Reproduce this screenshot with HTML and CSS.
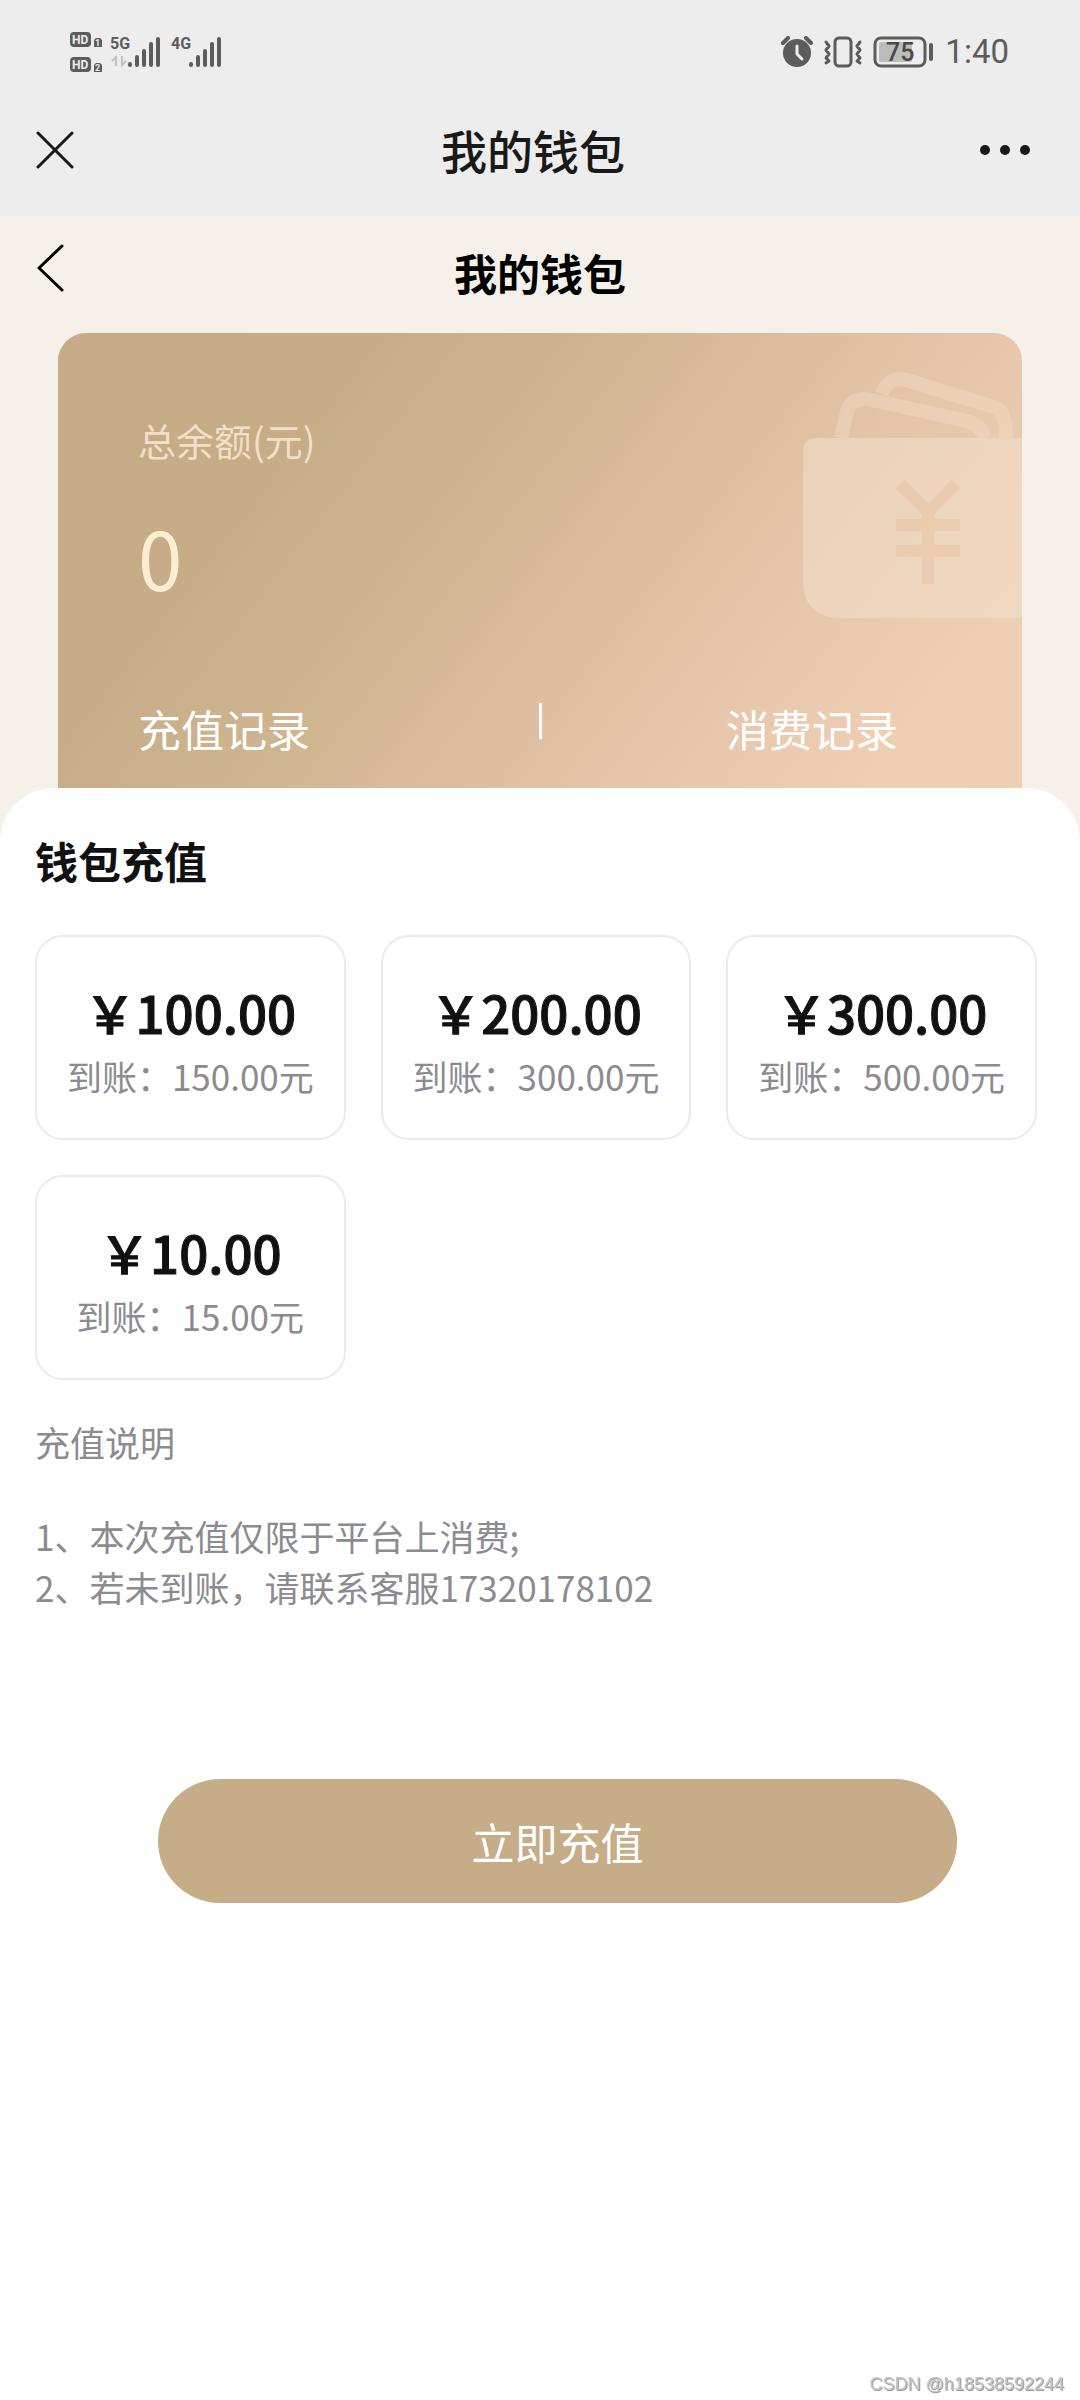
FILE: index.html
```html
<!DOCTYPE html>
<html lang="zh-CN">
<head>
<meta charset="utf-8">
<meta name="viewport" content="width=device-width, initial-scale=1">
<title>我的钱包</title>
<link rel="stylesheet" href="styles.css">
</head>
<body>
<header class="chrome">
  <div class="status">
    <svg class="status-signal" width="160" height="44" viewBox="0 0 160 44" role="img" aria-label="信号">
      <g fill="#5c5c5c">
        <rect x="0" y="2" width="21" height="15" rx="4"/>
        <rect x="0" y="27" width="21" height="15" rx="4"/>
        <path d="M26 8h4l2 2v7h-8v-7z"/>
        <path d="M26 33h4l2 2v7h-8v-7z"/>
      </g>
      <g class="status-hd">
        <text x="2" y="14">HD</text>
        <text x="2" y="39">HD</text>
        <text class="status-sim" x="25" y="16">1</text>
        <text class="status-sim" x="25" y="41">2</text>
      </g>
      <text class="status-net" x="40" y="19">5G</text>
      <text class="status-net" x="101" y="19">4G</text>
      <g fill="none" stroke="#c2c2c2" stroke-width="2">
        <path d="M42 31l4-4v9M52 26v9l4-4"/>
      </g>
      <g stroke="#5c5c5c" stroke-width="4" stroke-linecap="round">
        <path d="M60 34v1M67 27v8M74 21v14M81 14v21M88 9v26"/>
        <path d="M121 34v1M128 27v8M135 21v14M142 14v21M149 9v26"/>
      </g>
    </svg>
    <div class="status-right">
      <svg width="32" height="32" viewBox="0 0 32 32" aria-hidden="true">
        <circle cx="16" cy="17" r="14" fill="#5c5c5c"/>
        <path d="M2 7l5-5M25 2l5 5" stroke="#5c5c5c" stroke-width="4" stroke-linecap="round"/>
        <path d="M16 10v8l5 5" fill="none" stroke="#ededed" stroke-width="3" stroke-linecap="round" stroke-linejoin="round"/>
      </svg>
      <svg width="40" height="32" viewBox="0 0 40 32" fill="none" stroke="#5c5c5c" stroke-width="3" stroke-linecap="round" stroke-linejoin="round" aria-hidden="true">
        <rect x="12" y="2" width="16" height="28" rx="4"/>
        <path d="M3 6l3 4-3 4 3 4-3 4 3 3-3 2M37 6l-3 4 3 4-3 4 3 4-3 3 3 2"/>
      </svg>
      <svg width="62" height="32" viewBox="0 0 62 32" role="img" aria-label="电量 75%">
        <rect x="2" y="2" width="50" height="28" rx="6" fill="none" stroke="#5c5c5c" stroke-width="3"/>
        <rect x="6" y="6" width="33" height="20" rx="2" fill="#bcbcbc"/>
        <path d="M58 9v14" stroke="#5c5c5c" stroke-width="4" stroke-linecap="round"/>
        <text class="status-level" x="13" y="25">75</text>
      </svg>
      <span class="status-time">1:40</span>
    </div>
  </div>
  <div class="titlebar">
    <button class="icon-button" type="button" aria-label="关闭">
      <svg width="38" height="38" viewBox="0 0 38 38" fill="none" stroke="#191919" stroke-width="3" stroke-linecap="round"><path d="M2 2l34 34M36 2L2 36"/></svg>
    </button>
    <div class="titlebar-title">我的钱包</div>
    <button class="icon-button titlebar-more" type="button" aria-label="更多">
      <svg width="50" height="12" viewBox="0 0 50 12" fill="#191919"><circle cx="5" cy="6" r="5"/><circle cx="25" cy="6" r="5"/><circle cx="45" cy="6" r="5"/></svg>
    </button>
  </div>
</header>

<main class="page">
  <div class="page-header">
    <button class="icon-button page-back" type="button" aria-label="返回">
      <svg width="28" height="48" viewBox="0 0 28 48" fill="none" stroke="#000" stroke-width="3" stroke-linecap="round" stroke-linejoin="round"><path d="M25 2L2 24l23 22"/></svg>
    </button>
    <h1 class="page-title">我的钱包</h1>
  </div>

  <section class="balance">
    <svg class="balance-art" width="232" height="270" viewBox="0 0 232 270" aria-hidden="true">
      <g fill="none" stroke="#f2dcc6" stroke-opacity=".45" stroke-width="14" stroke-linejoin="round">
        <path d="M51 78l6-26q4-14 20-13l100 22q16 5 18 17"/>
        <path d="M92 34q6-18 24-14l88 27q12 4 12 31"/>
      </g>
      <path d="M232 78H27q-14 0-14 14v128q0 38 38 38h181z" fill="#f2dcc6" fill-opacity=".6"/>
      <path d="M110 124l28 28 28-28M106 165h64M106 191h64M138 152v72" fill="none" stroke="#e9c8ab" stroke-opacity=".7" stroke-width="12"/>
    </svg>
    <p class="balance-label">总余额(元)</p>
    <p class="balance-value">0</p>
    <nav class="records">
      <a class="record-link" href="#recharge">充值记录</a>
      <span class="records-divider"></span>
      <a class="record-link record-link-end" href="#spend">消费记录</a>
    </nav>
  </section>

  <section class="sheet">
    <h2 class="sheet-title">钱包充值</h2>
    <div class="plans">
      <button class="plan" type="button"><span class="plan-price">￥100.00</span><span class="plan-credit">到账：150.00元</span></button>
      <button class="plan" type="button"><span class="plan-price">￥200.00</span><span class="plan-credit">到账：300.00元</span></button>
      <button class="plan" type="button"><span class="plan-price">￥300.00</span><span class="plan-credit">到账：500.00元</span></button>
      <button class="plan" type="button"><span class="plan-price">￥10.00</span><span class="plan-credit">到账：15.00元</span></button>
    </div>
    <div class="notes">
      <h3 class="notes-title">充值说明</h3>
      <p>1、本次充值仅限于平台上消费;</p>
      <p>2、若未到账，请联系客服17320178102</p>
    </div>
    <button class="submit" type="button">立即充值</button>
  </section>
</main>
<div class="watermark">CSDN @h18538592244</div>
</body>
</html>
```
FILE: styles.css
```css
* { box-sizing: border-box; }

body {
  position: relative;
  display: flex;
  flex-direction: column;
  min-height: 100vh;
  margin: 0;
  background: #fff;
  color: #111;
  font-family: "Noto Sans CJK SC", sans-serif;
}

h1, h2, h3, p { margin: 0; }

button {
  padding: 0;
  border: 0;
  background: none;
  color: inherit;
  font: inherit;
  cursor: pointer;
}

svg { display: block; }

/* System and browser bars */
.chrome { background: #ededed; }

.status {
  display: flex;
  justify-content: space-between;
  align-items: center;
  height: 84px;
  padding: 20px 71px 0 70px;
  color: #5c5c5c;
  font-family: Roboto, sans-serif;
}

.status-right {
  display: flex;
  align-items: center;
  gap: 10px;
}

.status-time {
  font-size: 33px;
  line-height: 40px;
}

.status-hd {
  fill: #ededed;
  font-size: 12px;
  font-weight: 700;
}

.status-sim { font-size: 9px; }

.status-net {
  fill: #5c5c5c;
  font-size: 16px;
  font-weight: 700;
}

.status-level {
  fill: #4a4a4a;
  font-size: 25px;
  font-weight: 500;
}

.titlebar {
  display: grid;
  grid-template-columns: 1fr auto 1fr;
  align-items: center;
  height: 132px;
  padding: 0 50px 0 36px;
}

.titlebar-title {
  padding-bottom: 2px;
  color: #191919;
  font-size: 46px;
  font-weight: 500;
  line-height: 64px;
}

.icon-button { justify-self: start; }

.titlebar-more { justify-self: end; }

/* Wallet page */
.page {
  display: flex;
  flex: 1;
  flex-direction: column;
  background: #f5f0ea;
}

.page-header {
  display: grid;
  grid-template-columns: 1fr auto 1fr;
  align-items: center;
  height: 117px;
  padding: 0 37px;
}

.page-back { padding-bottom: 14px; }

.page-title {
  padding-bottom: 6px;
  color: #000;
  font-size: 43px;
  line-height: 62px;
}

.balance {
  position: relative;
  margin: 0 58px;
  padding-top: 79px;
  border-radius: 28px 28px 0 0;
  overflow: hidden;
  background: linear-gradient(128deg, #c5ab86 0%, #c6ac87 24%, #d1b792 46%, #d8b99a 50%, #e5c6aa 70%, #eecfb3 88%, #efd0b5 100%);
}

.balance-art {
  position: absolute;
  top: 27px;
  right: 0;
}

.balance-label {
  padding-left: 80px;
  color: #f1dfc7;
  font-size: 38px;
  line-height: 56px;
}

.balance-value {
  margin-top: 30px;
  padding-left: 80px;
  color: #ffedd3;
  font-size: 80px;
  line-height: 116px;
}

.records {
  display: grid;
  grid-template-columns: 1fr 3px 1fr;
  margin-top: 83px;
  height: 91px;
}

.record-link {
  padding-left: 80px;
  color: #fff;
  font-size: 43px;
  line-height: 62px;
  text-decoration: none;
}

.record-link-end {
  padding: 0 124px 0 0;
  text-align: right;
}

.records-divider {
  height: 36px;
  margin-top: 6px;
  background: #fff;
}

/* White sheet with the recharge plans */
.sheet {
  position: relative;
  flex: 1;
  padding: 41px 35px 60px;
  border-radius: 54px 54px 0 0;
  background: #fff;
}

.sheet-title {
  font-size: 43px;
  line-height: 62px;
}

.plans {
  display: grid;
  grid-template-columns: repeat(3, 1fr);
  gap: 35px;
  margin: 44px 8px 0 0;
}

.plan {
  display: flex;
  flex-direction: column;
  align-items: center;
  height: 205px;
  padding-top: 38px;
  border: 2px solid #ebebeb;
  border-radius: 28px;
}

.plan-price {
  font-size: 51px;
  font-weight: 500;
  line-height: 75px;
  -webkit-text-stroke: 1px #111;
}

.plan-credit {
  color: #8c8b90;
  font-size: 35px;
  line-height: 51px;
}

.notes {
  margin-top: 36px;
  color: #8c8b90;
  font-size: 35px;
  line-height: 51px;
}

.notes-title {
  margin-bottom: 43px;
  font-size: 35px;
  font-weight: 400;
}

.submit {
  display: block;
  width: calc(100% - 211px);
  height: 124px;
  margin: 167px 0 0 123px;
  border-radius: 62px;
  background: #c6ac87;
  color: #fff;
  font-size: 43px;
}

.watermark {
  position: absolute;
  right: 16px;
  bottom: 5px;
  color: #c4c4c4;
  font-family: "Liberation Sans", sans-serif;
  font-size: 18px;
  line-height: 22px;
  text-shadow: 1px 1px 0 #9a9a9a;
}
```
